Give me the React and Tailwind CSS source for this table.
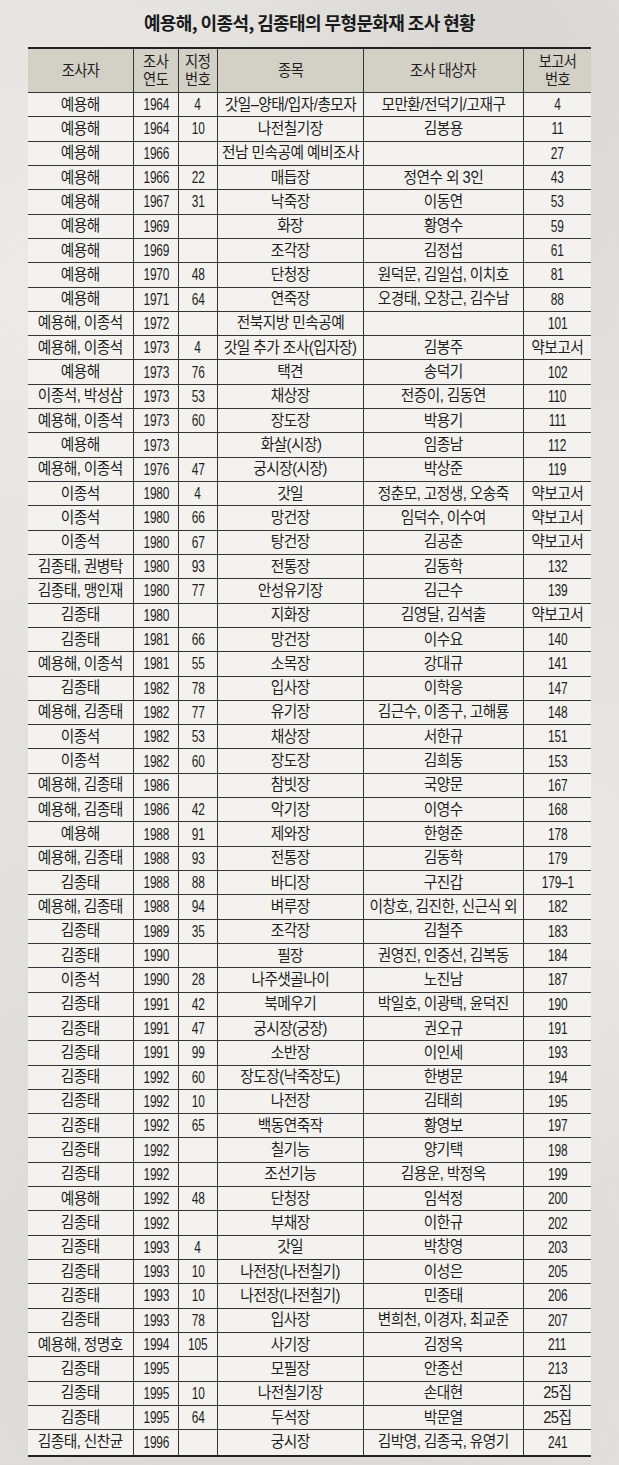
import React from "react";

const rows = [
  ["예용해", "1964", "4", "갓일–양태/입자/총모자", "모만환/전덕기/고재구", "4"],
  ["예용해", "1964", "10", "나전칠기장", "김봉용", "11"],
  ["예용해", "1966", "", "전남 민속공예 예비조사", "", "27"],
  ["예용해", "1966", "22", "매듭장", "정연수 외 3인", "43"],
  ["예용해", "1967", "31", "낙죽장", "이동연", "53"],
  ["예용해", "1969", "", "화장", "황영수", "59"],
  ["예용해", "1969", "", "조각장", "김정섭", "61"],
  ["예용해", "1970", "48", "단청장", "원덕문, 김일섭, 이치호", "81"],
  ["예용해", "1971", "64", "연죽장", "오경태, 오창근, 김수남", "88"],
  ["예용해, 이종석", "1972", "", "전북지방 민속공예", "", "101"],
  ["예용해, 이종석", "1973", "4", "갓일 추가 조사(입자장)", "김봉주", "약보고서"],
  ["예용해", "1973", "76", "택견", "송덕기", "102"],
  ["이종석, 박성삼", "1973", "53", "채상장", "전증이, 김동연", "110"],
  ["예용해, 이종석", "1973", "60", "장도장", "박용기", "111"],
  ["예용해", "1973", "", "화살(시장)", "임종남", "112"],
  ["예용해, 이종석", "1976", "47", "궁시장(시장)", "박상준", "119"],
  ["이종석", "1980", "4", "갓일", "정춘모, 고정생, 오송죽", "약보고서"],
  ["이종석", "1980", "66", "망건장", "임덕수, 이수여", "약보고서"],
  ["이종석", "1980", "67", "탕건장", "김공춘", "약보고서"],
  ["김종태, 권병탁", "1980", "93", "전통장", "김동학", "132"],
  ["김종태, 맹인재", "1980", "77", "안성유기장", "김근수", "139"],
  ["김종태", "1980", "", "지화장", "김영달, 김석출", "약보고서"],
  ["김종태", "1981", "66", "망건장", "이수요", "140"],
  ["예용해, 이종석", "1981", "55", "소목장", "강대규", "141"],
  ["김종태", "1982", "78", "입사장", "이학응", "147"],
  ["예용해, 김종태", "1982", "77", "유기장", "김근수, 이종구, 고해룡", "148"],
  ["이종석", "1982", "53", "채상장", "서한규", "151"],
  ["이종석", "1982", "60", "장도장", "김희동", "153"],
  ["예용해, 김종태", "1986", "", "참빗장", "국양문", "167"],
  ["예용해, 김종태", "1986", "42", "악기장", "이영수", "168"],
  ["예용해", "1988", "91", "제와장", "한형준", "178"],
  ["예용해, 김종태", "1988", "93", "전통장", "김동학", "179"],
  ["김종태", "1988", "88", "바디장", "구진갑", "179–1"],
  ["예용해, 김종태", "1988", "94", "벼루장", "이창호, 김진한, 신근식 외", "182"],
  ["김종태", "1989", "35", "조각장", "김철주", "183"],
  ["김종태", "1990", "", "필장", "권영진, 인중선, 김복동", "184"],
  ["이종석", "1990", "28", "나주샛골나이", "노진남", "187"],
  ["김종태", "1991", "42", "북메우기", "박일호, 이광택, 윤덕진", "190"],
  ["김종태", "1991", "47", "궁시장(궁장)", "권오규", "191"],
  ["김종태", "1991", "99", "소반장", "이인세", "193"],
  ["김종태", "1992", "60", "장도장(낙죽장도)", "한병문", "194"],
  ["김종태", "1992", "10", "나전장", "김태희", "195"],
  ["김종태", "1992", "65", "백동연죽작", "황영보", "197"],
  ["김종태", "1992", "", "칠기능", "양기택", "198"],
  ["김종태", "1992", "", "조선기능", "김용운, 박정옥", "199"],
  ["예용해", "1992", "48", "단청장", "임석정", "200"],
  ["김종태", "1992", "", "부채장", "이한규", "202"],
  ["김종태", "1993", "4", "갓일", "박창영", "203"],
  ["김종태", "1993", "10", "나전장(나전칠기)", "이성은", "205"],
  ["김종태", "1993", "10", "나전장(나전칠기)", "민종태", "206"],
  ["김종태", "1993", "78", "입사장", "변희천, 이경자, 최교준", "207"],
  ["예용해, 정명호", "1994", "105", "사기장", "김정옥", "211"],
  ["김종태", "1995", "", "모필장", "안종선", "213"],
  ["김종태", "1995", "10", "나전칠기장", "손대현", "25집"],
  ["김종태", "1995", "64", "두석장", "박문열", "25집"],
  ["김종태, 신찬균", "1996", "", "궁시장", "김박영, 김종국, 유영기", "241"],
];

const grid = "grid grid-cols-[105px_45px_39px_146px_160px_68px]";

function Cell({ children, first }) {
  return (
    <div
      className={
        "flex items-center justify-center whitespace-nowrap " +
        (first ? "" : "border-l border-[#353535]")
      }
    >
      {children}
    </div>
  );
}

function T({ children }) {
  const isNum = /^[0-9–]+$/.test(children || "");
  return (
    <span
      className={
        "inline-block " +
        (isNum
          ? "text-[17px] scale-x-[0.7] tracking-[-0.3px]"
          : "scale-x-[0.92] tracking-[-0.6px]")
      }
    >
      {children}
    </span>
  );
}

function H2({ a, b }) {
  return (
    <span className="flex flex-col items-center scale-x-[0.92] tracking-[-0.6px] leading-[18px]">
      <span>{a}</span>
      <span>{b}</span>
    </span>
  );
}

export default function App() {
  return (
    <div
      className="min-h-[1465px] w-full bg-[#e2e1de] text-[#1e1e1e] bg-[radial-gradient(circle_at_10%_20%,#ecebe8_0,transparent_35%),radial-gradient(circle_at_90%_60%,#eae9e6_0,transparent_30%),radial-gradient(circle_at_40%_90%,#d9d8d5_0,transparent_40%),radial-gradient(circle_at_80%_5%,#d8d7d3_0,transparent_25%)]"
      style={{ fontFamily: '"Liberation Sans", "Noto Sans CJK KR", sans-serif' }}
    >
      <div className="flex h-[47px] items-center justify-center pb-[3px]">
        <h1
          className="text-[18px] font-bold tracking-[-0.6px] text-[#1a1a1a]"
          style={{ fontFamily: '"Noto Sans CJK KR", sans-serif' }}
        >
          예용해, 이종석, 김종태의 무형문화재 조사 현황
        </h1>
      </div>
      <div className="ml-[28px] w-[563px] border-t-2 border-b-2 border-[#222222]">
        <div className={grid + " h-[44px] bg-[#d3d0c5] border-b border-[#353535] text-[15.5px]"}>
          <Cell first><T>조사자</T></Cell>
          <Cell><H2 a="조사" b="연도" /></Cell>
          <Cell><H2 a="지정" b="번호" /></Cell>
          <Cell><T>종목</T></Cell>
          <Cell><T>조사 대상자</T></Cell>
          <Cell><H2 a="보고서" b="번호" /></Cell>
        </div>
        {rows.map((r, i) => (
          <div
            key={i}
            className={
              grid +
              " h-[24.32px] bg-[#f3f2ee] text-[16px] leading-none " +
              (i < rows.length - 1 ? "border-b border-[#353535]" : "")
            }
          >
            {r.map((c, j) => (
              <Cell key={j} first={j === 0}>
                <T>{c}</T>
              </Cell>
            ))}
          </div>
        ))}
      </div>
    </div>
  );
}
